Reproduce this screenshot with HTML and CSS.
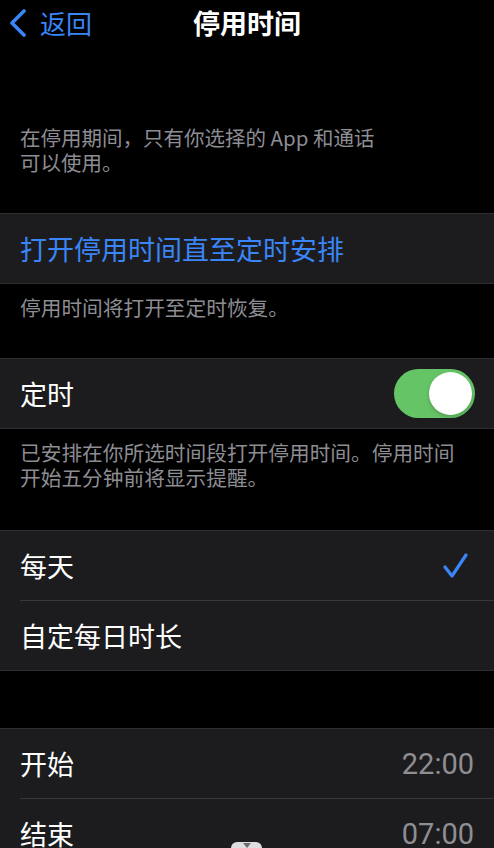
FILE: index.html
```html
<!DOCTYPE html>
<html>
<head>
    <title>停用时间</title>
    <link rel="stylesheet" href="styles.css">
</head>
<body>
    <div class="screen">
        <div class="nav">
            <div class="back">
                <svg class="chevron" width="20" height="28" viewBox="0 0 20 28">
                    <path d="M16 2 L4 14 L16 26" fill="none" stroke="#3a85f7" stroke-width="3.6" stroke-linecap="round" stroke-linejoin="round"/>
                </svg>
                <span>返回</span>
            </div>
            <h1 class="title">停用时间</h1>
        </div>

        <p class="intro">在停用期间，只有你选择的 App 和通话<br>可以使用。</p>

        <div class="group">
            <div class="row"><span class="link">打开停用时间直至定时安排</span></div>
        </div>
        <p class="note">停用时间将打开至定时恢复。</p>

        <div class="group">
            <div class="row">
                <span class="label">定时</span>
                <div class="toggle"><div class="knob"></div></div>
            </div>
        </div>
        <p class="note">已安排在你所选时间段打开停用时间。停用时间开始五分钟前将显示提醒。</p>

        <div class="group spaced">
            <div class="row">
                <span class="label">每天</span>
                <svg class="check" width="28" height="28" viewBox="0 0 28 28">
                    <path d="M3 15 L10 24 L24 3" fill="none" stroke="#3a85f7" stroke-width="3.2" stroke-linecap="round" stroke-linejoin="round"/>
                </svg>
            </div>
            <div class="row"><span class="label">自定每日时长</span></div>
        </div>

        <div class="group gap-big">
            <div class="row">
                <span class="label">开始</span>
                <span class="value">22:00</span>
            </div>
            <div class="row">
                <span class="label">结束</span>
                <span class="value">07:00</span>
            </div>
        </div>

        <div class="handle"><span class="arrow"></span></div>
    </div>
</body>
</html>
```

FILE: styles.css
```css
body {
    margin: 0;
    padding: 0;
    background-color: #000;
    font-family: "Noto Sans CJK SC", "Noto Sans", sans-serif;
    color: #fff;
}

.screen {
    position: relative;
    width: 494px;
    height: 848px;
    overflow: hidden;
}

.nav {
    position: relative;
    height: 46px;
    display: flex;
    align-items: center;
    justify-content: center;
}

.back {
    position: absolute;
    left: 8px;
    top: 9px;
    display: flex;
    align-items: center;
    gap: 12px;
    color: #3a85f7;
    font-size: 26px;
    line-height: 28px;
}

.title {
    margin: 0;
    font-size: 27px;
    font-weight: 700;
    line-height: 44px;
}

.intro {
    margin: 79px 0 0;
    padding: 0 20px;
    font-size: 20.5px;
    line-height: 25px;
    color: #8d8d93;
}

.note {
    margin: 0;
    padding: 11px 20px 0;
    font-size: 20.7px;
    line-height: 25px;
    color: #8d8d93;
}

.group {
    margin-top: 38px;
    background-color: #1c1c1e;
    border-top: 1px solid #2e2e30;
    border-bottom: 1px solid #2e2e30;
}

.group.spaced {
    margin-top: 40px;
}

.group.gap-big {
    margin-top: 57px;
}

.row {
    height: 69px;
    margin-left: 20px;
    padding-right: 20px;
    display: flex;
    align-items: center;
    justify-content: space-between;
    font-size: 27px;
}

.row + .row {
    border-top: 1px solid #38383a;
}

.link {
    color: #3a85f7;
}

.toggle {
    width: 81px;
    height: 49px;
    border-radius: 25px;
    background-color: #65c466;
    display: flex;
    align-items: center;
    justify-content: flex-end;
    padding-right: 3px;
    box-sizing: border-box;
    margin-right: -1px;
}

.knob {
    width: 43px;
    height: 43px;
    border-radius: 50%;
    background-color: #fff;
    box-shadow: 0 2px 4px rgba(0, 0, 0, 0.2);
}

.check {
    margin-right: 4px;
}

.value {
    font-family: Roboto, "Noto Sans", sans-serif;
    font-size: 29px;
    color: #8e8e93;
}

.handle {
    position: absolute;
    left: 231px;
    bottom: -6px;
    width: 31px;
    height: 12px;
    border-radius: 7px;
    background-color: #dedee0;
}

.arrow {
    position: absolute;
    left: 12px;
    top: 1px;
    border-left: 4px solid transparent;
    border-right: 4px solid transparent;
    border-top: 5px solid #6c6c70;
}
```
